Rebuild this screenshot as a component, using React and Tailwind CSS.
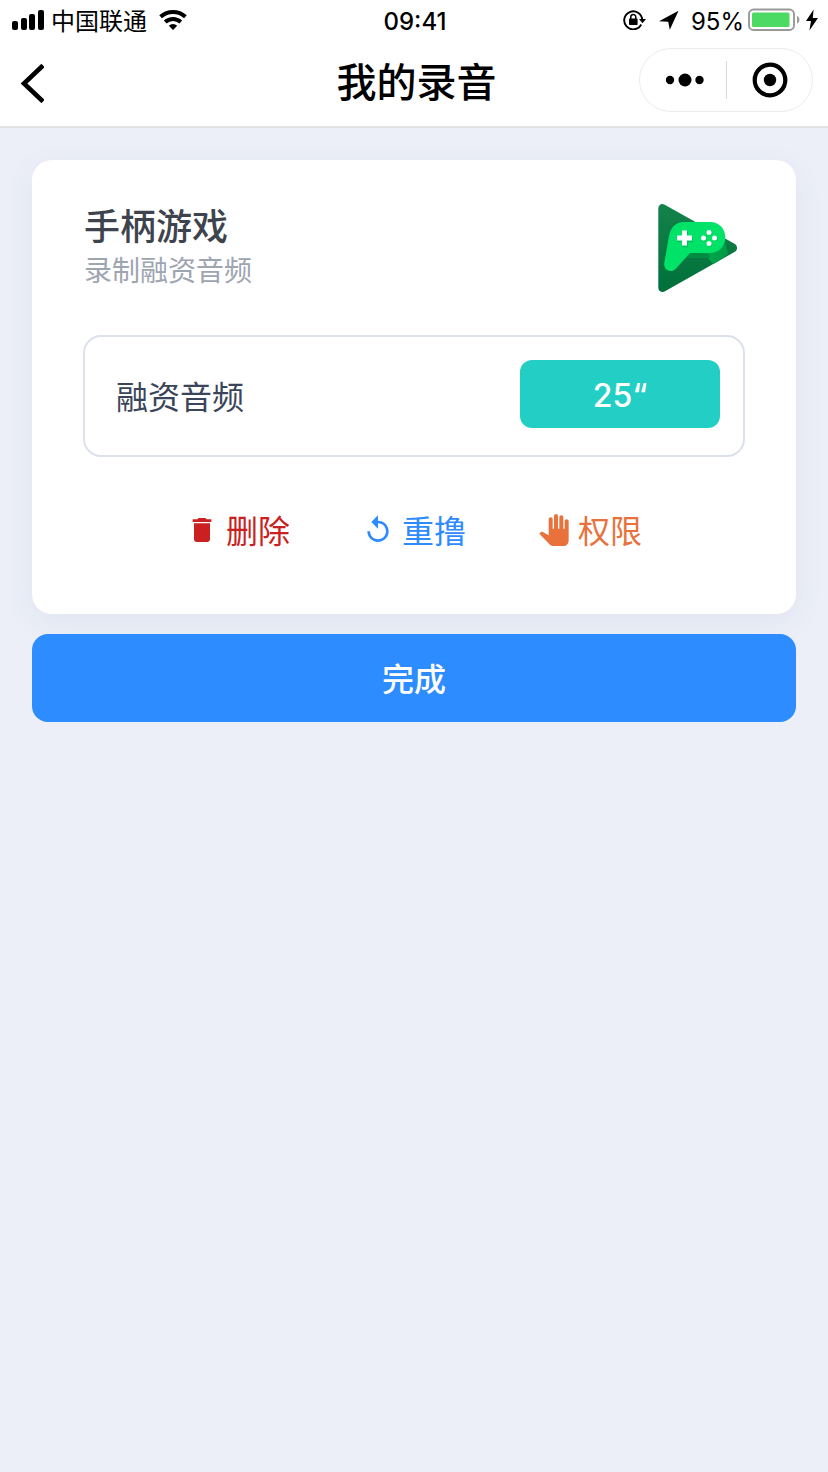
import React from 'react';
import { MdDelete, MdReplay } from 'react-icons/md';

function SignalIcon() {
  return (
    <svg className="h-5 w-8" viewBox="0 0 32 20" aria-hidden="true">
      <rect x="0" y="11" width="6" height="9" rx="2" />
      <rect x="9" y="8" width="6" height="12" rx="2" />
      <rect x="17" y="4" width="6" height="16" rx="2" />
      <rect x="26" y="0" width="6" height="20" rx="2" />
    </svg>
  );
}

function WifiIcon() {
  return (
    <svg className="h-5 w-7" viewBox="0 0 28 20" aria-hidden="true">
      <g fill="none" stroke="#000" strokeWidth="4">
        <path d="M1.600 6.800a18.500 18.500 0 0 1 24.800 0" />
        <path d="M6.200 12a11.500 11.500 0 0 1 15.600 0" />
      </g>
      <path d="M14 20l-4.200-4.300a6 6 0 0 1 8.400 0z" />
    </svg>
  );
}

function RotationLockIcon() {
  return (
    <svg className="h-5 w-6" viewBox="0 0 24 20" aria-hidden="true">
      <path d="M18.200 14.500A9 9 0 1 1 19.200 10" fill="none" stroke="#000" strokeWidth="1.900" />
      <path d="M16 9h7l-3.500 4.200z" />
      <rect x="6" y="8.600" width="8.600" height="6.400" rx="0.800" />
      <path d="M7.800 9V7a2.500 2.500 0 0 1 5 0v2" fill="none" stroke="#000" strokeWidth="1.500" />
    </svg>
  );
}

function LocationIcon() {
  return (
    <svg className="h-5 w-5" viewBox="0 0 20 20" aria-hidden="true">
      <path d="M19.500.8L0 11.200l9.200.5 1.600 8z" />
    </svg>
  );
}

function BatteryIcon() {
  return (
    <svg className="h-6 w-[52px]" viewBox="0 0 52 24" aria-hidden="true">
      <rect x="1" y="1.500" width="45" height="20.500" rx="4.500" fill="#fff" stroke="#999" strokeWidth="1.900" />
      <rect x="4" y="4.500" width="37.500" height="14.500" rx="1.500" fill="#4cd964" />
      <path d="M49 8c3.200 1.200 3.200 6.300 0 7.500z" fill="#999" />
    </svg>
  );
}

function BoltIcon() {
  return (
    <svg className="h-[22px] w-3" viewBox="0 0 12 22" aria-hidden="true">
      <path d="M7.600.5L0 12h5L3.400 21.500 12 9H6.800z" />
    </svg>
  );
}

function HandIcon(props) {
  return (
    <svg viewBox="0 0 24 24" fill="currentColor" {...props}>
      <path d="M23 5.500V20c0 2.200-1.800 4-4 4h-7.300c-1.080 0-2.100-.43-2.850-1.190L1 14.830s1.260-1.230 1.300-1.250c.22-.19.49-.29.79-.29.22 0 .42.06.6.16.04.01 4.310 2.460 4.310 2.460V4c0-.83.67-1.500 1.500-1.500S11 3.170 11 4v7h1V1.500c0-.83.67-1.500 1.500-1.500S15 .67 15 1.500V11h1V2.500c0-.83.67-1.500 1.500-1.500s1.500.67 1.500 1.500V11h1V5.500c0-.83.67-1.500 1.500-1.500s1.500.67 1.500 1.500z" />
    </svg>
  );
}

function GameLogo() {
  return (
    <svg className="h-[88px] w-20 shrink-0" viewBox="18 14 80 88" role="img" aria-label="手柄游戏">
      <defs>
        <linearGradient id="tri" x1="0" y1="0" x2="0" y2="1">
          <stop offset="0" stopColor="#14824a" />
          <stop offset="1" stopColor="#00703a" />
        </linearGradient>
        <linearGradient id="side" x1="0" y1="0" x2="1" y2="0">
          <stop offset="0" stopColor="#00b24e" />
          <stop offset="1" stopColor="#009a46" />
        </linearGradient>
        <clipPath id="triClip">
          <path d="M18.300 18.500c0-3.600 3.300-5.600 6.400-3.800L94.500 53.800c3.400 2 3.400 6.200 0 8.200L25 101.300c-3.300 1.900-6.700-.2-6.700-3.800z" />
        </clipPath>
      </defs>
      <path fill="url(#tri)" d="M18.300 18.500c0-3.600 3.300-5.600 6.400-3.800L94.500 53.800c3.400 2 3.400 6.200 0 8.200L25 101.300c-3.300 1.900-6.700-.2-6.700-3.800z" />
      <g clipPath="url(#triClip)">
        <path fill="url(#side)" d="M84 47l4 17-14 11-6-7H46l8-7z" />
        <path fill="#008c42" d="M50 62h18l2 6H46z" />
      </g>
      <path fill="#00e268" d="M44 32h26c9.500 0 15.300 7 15.300 15.500S79 63 70 63H50L36 78.500c-2.600 2.900-6 3.200-8.700 1.600-2.500-1.500-3.500-4.200-3-7.300L29 46c1.500-8.700 6.600-14 15-14z" />
      <path fill="#00893f" fillOpacity=".3" d="M42.500 41.500h5.500v5h5v6h-5v5h-6v-5h-5v-5h5.500z" />
      <path fill="#fff" d="M42 40.500h5v5h5v5h-5v5h-5v-5h-5v-5h5z" />
      <g fill="#00893f" fillOpacity=".25">
        <circle cx="69.400" cy="43.200" r="2.700" />
        <circle cx="64" cy="48.800" r="2.700" />
        <circle cx="75" cy="48.800" r="2.700" />
        <circle cx="69.400" cy="54.400" r="2.700" />
      </g>
      <g fill="#fff">
        <circle cx="69" cy="42.500" r="2.500" />
        <circle cx="63.500" cy="48" r="2.500" />
        <circle cx="74.500" cy="48" r="2.500" />
        <circle cx="69" cy="53.500" r="2.500" />
      </g>
    </svg>
  );
}

function StatusBar() {
  return (
    <div className="grid h-10 grid-cols-[1fr_auto_1fr] items-center pr-2.5 pl-3 text-2xl">
      <div className="flex items-center">
        <SignalIcon />
        <span className="ml-[7px] pt-1">中国联通</span>
        <span className="ml-3 flex"><WifiIcon /></span>
      </div>
      <span className="pt-1 font-medium">09:41</span>
      <div className="flex items-center justify-end">
        <RotationLockIcon />
        <span className="ml-3 flex"><LocationIcon /></span>
        <span className="ml-3 pt-1">95%</span>
        <span className="ml-1 flex"><BatteryIcon /></span>
        <span className="ml-1.5 flex"><BoltIcon /></span>
      </div>
    </div>
  );
}

function NavBar() {
  return (
    <div className="grid h-[88px] grid-cols-[1fr_auto_1fr] items-center border-b-2 border-[#e0e1e3] pr-[15px] pb-1.5 pl-5">
      <button type="button" aria-label="返回" className="w-fit pt-1.5">
        <svg className="h-10 w-6" viewBox="0 0 24 40" fill="none" stroke="#000" strokeWidth="4.600">
          <path d="M23 2.500L4 20.500l19 18" />
        </svg>
      </button>
      <h1 className="pt-1.5 text-[40px] leading-none font-medium">我的录音</h1>
      <div className="flex h-16 w-[174px] items-center justify-self-end rounded-full border border-[#ececec]">
        <button type="button" aria-label="更多" className="flex w-[86px] justify-center pl-1">
          <svg className="h-4 w-10" viewBox="0 0 40 16">
            <circle cx="5" cy="8" r="4.200" />
            <circle cx="20" cy="8" r="6.500" />
            <circle cx="34.500" cy="8" r="4.200" />
          </svg>
        </button>
        <span className="h-[38px] w-px bg-[#d8d8d8]" />
        <button type="button" aria-label="关闭" className="flex flex-1 justify-center">
          <svg className="h-9 w-9" viewBox="0 0 36 36">
            <circle cx="18" cy="18" r="15.300" fill="none" stroke="#000" strokeWidth="4.200" />
            <circle cx="18" cy="18" r="6.200" />
          </svg>
        </button>
      </div>
    </div>
  );
}

const actions = [
  { label: '删除', Icon: MdDelete, color: 'text-[#cb2020]' },
  { label: '重撸', Icon: MdReplay, color: 'text-[#2e8bff]' },
  { label: '权限', Icon: HandIcon, color: 'text-[#e8713c]' },
];

export default function App() {
  return (
    <div className="min-h-screen bg-[#eceff8] font-['Inter','Noto_Sans_CJK_SC',sans-serif] text-black">
      <header className="bg-white">
        <StatusBar />
        <NavBar />
      </header>
      <main className="flex flex-col gap-5 p-8">
        <section className="rounded-[20px] bg-white px-[51px] pt-11 pb-[60px] shadow-[0_8px_32px_rgba(50,70,110,0.06)]">
          <div className="flex items-start justify-between pr-[7px] pl-px">
            <div className="pt-px">
              <h2 className="text-4xl leading-[44px] font-medium text-[#3d444d]">手柄游戏</h2>
              <p className="text-[28px] leading-[44px] text-[#9ea5b1]">录制融资音频</p>
            </div>
            <GameLogo />
          </div>
          <div className="mt-[42px] flex items-start justify-between rounded-[18px] border-2 border-[#dce1ec] pt-[23px] pr-[23px] pb-[19px] pl-[31px]">
            <span className="text-[32px] leading-[76px] text-[#3b4559]">融资音频</span>
            <button type="button" className="h-[68px] w-[200px] rounded-xl bg-[#23cfc4] pt-1 text-[32px] font-medium text-white">
              25“
            </button>
          </div>
          <div className="mt-[49px] flex justify-center gap-[72px]">
            {actions.map(({ label, Icon, color }) => (
              <button key={label} type="button" className={`flex h-12 items-center gap-2 text-[32px] leading-11 ${color}`}>
                <Icon className="h-8 w-8" aria-hidden="true" />
                <span className="pt-1">{label}</span>
              </button>
            ))}
          </div>
        </section>
        <button type="button" className="h-[88px] rounded-2xl bg-[#2d8cff] pt-1 text-[32px] font-medium text-white">
          完成
        </button>
      </main>
    </div>
  );
}
